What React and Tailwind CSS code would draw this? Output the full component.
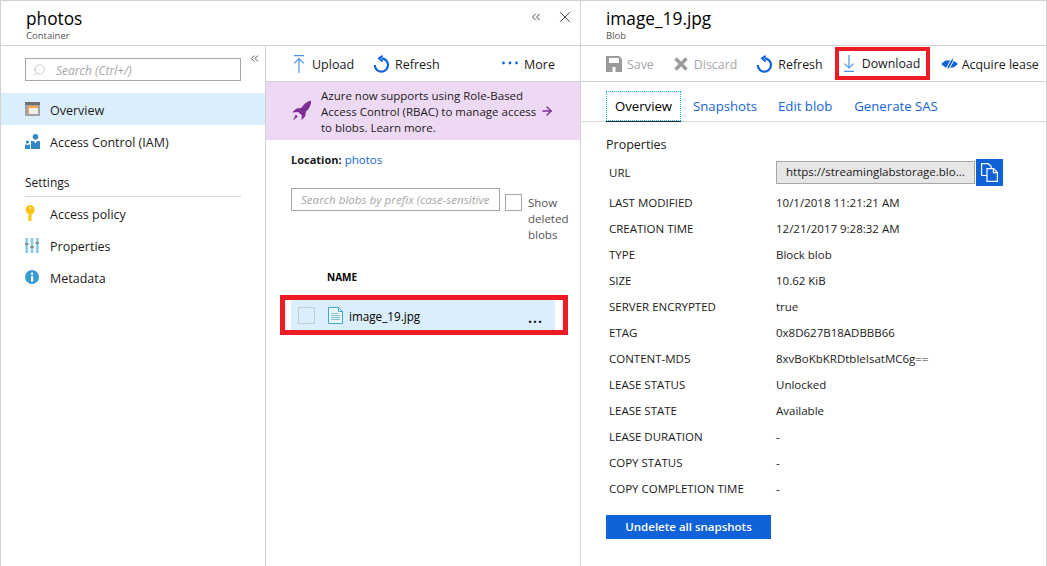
import { ChevronsLeft, X, Search, ArrowRight } from "lucide-react";

const font = { fontFamily: '"Open Sans", "Noto Sans", sans-serif' };

const props = [
  ["LAST MODIFIED", "10/1/2018 11:21:21 AM"],
  ["CREATION TIME", "12/21/2017 9:28:32 AM"],
  ["TYPE", "Block blob"],
  ["SIZE", "10.62 KiB"],
  ["SERVER ENCRYPTED", "true"],
  ["ETAG", "0x8D627B18ADBBB66"],
  ["CONTENT-MD5", "8xvBoKbKRDtbleIsatMC6g=="],
  ["LEASE STATUS", "Unlocked"],
  ["LEASE STATE", "Available"],
  ["LEASE DURATION", "-"],
  ["COPY STATUS", "-"],
  ["COPY COMPLETION TIME", "-"],
];

function OverviewIcon() {
  return (
    <svg width="15" height="14" viewBox="0 0 15 14">
      <rect width="15" height="14" fill="#a3a3a3" />
      <rect width="15" height="3" fill="#6f6f6f" />
      <rect x="3" y="4" width="10" height="8" fill="#f6a94a" />
      <rect x="4" y="6" width="9" height="6" fill="#f2f0e8" />
    </svg>
  );
}

function IamIcon() {
  return (
    <svg width="15" height="15" viewBox="0 0 15 15" fill="#2f87c4">
      <circle cx="10.5" cy="2.8" r="2.8" />
      <path d="M6 7h2.6l1.9 2.2L12.4 7H15v8H6z" />
      <circle cx="2.5" cy="8" r="1.6" />
      <path d="M0 10.5h1.6l.9 1 .9-1H5V15H0z" />
    </svg>
  );
}

function KeyIcon() {
  return (
    <svg width="10" height="16" viewBox="0 0 10 16" fill="#f9c514">
      <path d="M5 0a4.8 4.8 0 0 1 1.5 9.3V16H4l-1-1v-1.2l1-.8-1-.8V11l1-.8v-.9A4.8 4.8 0 0 1 5 0z" />
      <circle cx="5" cy="2.8" r="1" fill="#fff0a8" />
    </svg>
  );
}

function SlidersIcon() {
  return (
    <svg width="14" height="15" viewBox="0 0 14 15">
      <rect x="0" width="3.4" height="15" fill="#c4e2f1" />
      <rect x="5.3" width="3.4" height="15" fill="#c4e2f1" />
      <rect x="10.6" width="3.4" height="15" fill="#c4e2f1" />
      <rect x="1.2" width="1" height="15" fill="#5fb3dc" />
      <rect x="6.5" width="1" height="15" fill="#5fb3dc" />
      <rect x="11.8" width="1" height="15" fill="#5fb3dc" />
      <rect x="0" y="5" width="3.4" height="2" fill="#8c8c8c" />
      <rect x="5.3" y="8" width="3.4" height="2" fill="#8c8c8c" />
      <rect x="10.6" y="4" width="3.4" height="2" fill="#8c8c8c" />
    </svg>
  );
}

function InfoIcon() {
  return (
    <svg width="14" height="14" viewBox="0 0 14 14">
      <circle cx="7" cy="7" r="7" fill="#3a9bd0" />
      <rect x="6" y="6" width="2.2" height="5.5" fill="#fff" />
      <circle cx="7.1" cy="3.8" r="1.2" fill="#fff" />
    </svg>
  );
}

function RocketIcon() {
  return (
    <svg width="21" height="22" viewBox="0 0 21 22" fill="#7d2d96">
      <path d="M20 .5c.4 4.4-1.4 8.2-5 11l-.8 4.8-3.6 4 .2-5-3.6-3.4L1 12.4l4.6-3.8 4.6-.6C13 3.8 16 1.4 20 .5z" />
      <path d="M4.8 14.4l2 2L2 20.4z" />
    </svg>
  );
}

function FileIcon() {
  return (
    <svg width="15" height="17" viewBox="0 0 15 17" fill="none" stroke="#45a5d2">
      <path d="M.5.5h10l4 4v12H.5z" fill="#eaf6fc" />
      <path d="M10.5.5v4h4" />
      <path d="M3 6.5h7M3 8.5h9M3 10.5h9M3 12.5h9" stroke="#7fc0de" />
    </svg>
  );
}

function LeaseIcon() {
  return (
    <svg width="17" height="16" viewBox="0 0 17 16">
      <path d="M0 8l4.5-3.5h8L17 8l-4.5 3.5h-8z" fill="#0f62d8" />
      <path d="M5 13 10.5 3M7.6 13.6 13 4" stroke="#fff" strokeWidth="1" />
      <path d="M7 12.6 11.8 2.6" stroke="#0f62d8" strokeWidth="1" />
    </svg>
  );
}

function RefreshIcon() {
  return (
    <svg width="17" height="18" viewBox="0 0 17 18" fill="none" stroke="#0f62d8">
      <path d="M8.5 3.4a6.6 6.6 0 1 1-6.7 6.6" strokeWidth="2.2" />
      <path d="M9.6.8 6 3.4l3.6 3" strokeWidth="2" />
    </svg>
  );
}

function CopyIcon() {
  return (
    <svg width="17" height="19" viewBox="0 0 17 19" fill="none" stroke="#fff" strokeWidth="1.2">
      <path d="M6 12.5H.6V.6h6.6l3 3v2" />
      <path d="M6 5.6h6.6l3.8 3.8v9H6z" fill="#0f62d8" />
      <path d="M12.4 5.6v4h4" />
    </svg>
  );
}

function DiscardIcon() {
  return (
    <svg width="14" height="14" viewBox="0 0 14 14" stroke="#9a9a9a" strokeWidth="3.4">
      <path d="M1.5 1.5l11 11M12.5 1.5l-11 11" />
    </svg>
  );
}

function SaveIcon() {
  return (
    <svg width="16" height="16" viewBox="0 0 16 16" fill="#9a9a9a">
      <path d="M0 0h13l3 3v13H0z" />
      <rect x="3" y="2" width="10" height="5" fill="#fff" />
      <rect x="6.5" y="11" width="3" height="5" fill="#fff" />
    </svg>
  );
}

function UploadIcon() {
  return (
    <svg width="12" height="18" viewBox="0 0 12 18" fill="none" stroke="#4c95e6" strokeWidth="1.2">
      <path d="M1 .6h10M6 18V3.6M1.2 8.4 6 3.6l4.8 4.8" />
    </svg>
  );
}

function DownloadIcon() {
  return (
    <svg width="12" height="17" viewBox="0 0 12 17" fill="none" stroke="#4c95e6" strokeWidth="1.2">
      <path d="M1 16.4h10M6 0v13M1.4 8.6 6 13l4.6-4.4" />
    </svg>
  );
}

function MoreDots() {
  return (
    <svg width="16" height="4" viewBox="0 0 16 4" fill="#0f62d8" className="-mt-[2px]">
      <circle cx="1.5" cy="2" r="1.4" />
      <circle cx="8" cy="2" r="1.4" />
      <circle cx="14.5" cy="2" r="1.4" />
    </svg>
  );
}

function NavItem({ icon, label, active }) {
  return (
    <div className={`flex items-center h-8 pl-[24px] ${active ? "bg-[#dbeefc]" : ""}`}>
      <div className="w-[25px] flex items-center">{icon}</div>
      <span className="pt-[4px]">{label}</span>
    </div>
  );
}

export default function App() {
  return (
    <div style={font} className="w-[1047px] h-[566px] flex bg-white text-[12.5px] text-[#1a1a1a] overflow-hidden border-t border-[#d2d2d2]">
      {/* photos blade */}
      <div className="w-[580px] flex flex-col border-l border-[#d2d2d2] shrink-0">
        <div className="h-[45px] flex justify-between border-b border-[#d2d2d2] shrink-0">
          <div className="pl-[25px] pt-[6px]">
            <div className="text-[17.3px] leading-[23px] text-black">photos</div>
            <div className="text-[9.5px] leading-[12px] text-[#555]">Container</div>
          </div>
          <div className="flex gap-[13px] pr-[6px] pt-[7px] text-[#222]">
            <ChevronsLeft size={14} strokeWidth={1.4} className="mt-[2px]" />
            <X size={18} strokeWidth={1.1} />
          </div>
        </div>

        <div className="flex flex-1">
          {/* left nav */}
          <div className="w-[265px] border-r border-[#d2d2d2] relative shrink-0">
            <ChevronsLeft size={13} strokeWidth={1.4} className="absolute left-[247px] top-[6px] text-[#222]" />
            <div className="pt-[12px] pl-[24px]">
              <div className="w-[216px] h-[23px] border border-[#a6a6a6] flex items-center pl-[6px] gap-[10px] text-[12px] italic text-[#a6a6a6]">
                <Search size={14} strokeWidth={1} className="-scale-x-100" />
                <span className="pt-[3px]">Search (Ctrl+/)</span>
              </div>
            </div>
            <div className="mt-[12px]">
              <NavItem active icon={<OverviewIcon />} label="Overview" />
              <NavItem icon={<IamIcon />} label="Access Control (IAM)" />
            </div>
            <div className="mt-[12px] mx-[24px] w-[216px] h-[28px] border-b border-[#d9d9d9] leading-[27px] text-[12px]">Settings</div>
            <div>
              <NavItem icon={<KeyIcon />} label="Access policy" />
              <NavItem icon={<SlidersIcon />} label="Properties" />
              <NavItem icon={<InfoIcon />} label="Metadata" />
            </div>
          </div>

          {/* blob list */}
          <div className="flex-1 flex flex-col">
            <div className="h-9 flex items-center border-b border-[#d2d2d2] pl-[27px] pr-[25px] shrink-0">
              <UploadIcon />
              <span className="ml-[7px] pt-[3px]">Upload</span>
              <div className="ml-[19px]"><RefreshIcon /></div>
              <span className="ml-[5px] pt-[3px]">Refresh</span>
              <div className="ml-auto"><MoreDots /></div>
              <span className="ml-[6px] pt-[3px]">More</span>
            </div>
            <div className="h-[58px] bg-[#eed9f4] flex items-center pl-[25px] pr-[26px] shrink-0">
              <RocketIcon />
              <div className="ml-[9px] pt-[2px] leading-[16px] text-[11.5px] w-[218px] whitespace-nowrap">
                Azure now supports using Role-Based<br />Access Control (RBAC) to manage access<br />to blobs. Learn more.
              </div>
              <ArrowRight size={14} strokeWidth={2.4} className="ml-auto text-[#7d2d96]" />
            </div>
            <div className="pl-[25px] pt-[12px] leading-[16px] text-[11.5px]">
              <span className="font-bold text-[11px]">Location:</span> <span className="text-[#1565d8]">photos</span>
            </div>
            <div className="flex pl-[25px] pt-[20px]">
              <div className="w-[209px] h-[23px] border border-[#a6a6a6] px-[9px] text-[11.6px] leading-[21px] italic text-[#a6a6a6] overflow-hidden whitespace-nowrap">
                Search blobs by prefix (case-sensitive
              </div>
              <div className="w-[17px] h-[17px] border border-[#a6a6a6] ml-[5px] mt-[6px] shrink-0" />
              <div className="ml-[6px] mt-[7px] leading-[16px] text-[11.5px] text-[#555]">Show<br />deleted<br />blobs</div>
            </div>
            <div className="pl-[61px] mt-[27px] text-[10px] font-bold leading-[14px] text-black">NAME</div>
            {/* highlighted row */}
            <div className="ml-[14px] mt-[11px] w-[288px] h-[40px] border-[5px] border-[#ed1c24] pl-[6px] shrink-0">
              <div className="w-[264px] h-[30px] bg-[#dbeefc] flex items-center pl-[7px] pr-[12px]">
                <div className="w-[17px] h-[17px] border border-[#c5ced6]" />
                <div className="ml-[13px]"><FileIcon /></div>
                <span className="ml-[6px] pt-[3px] text-[11.7px] font-medium text-black">image_19.jpg</span>
                <span className="ml-auto font-bold text-[14px] leading-[14px] mt-[6px] tracking-[1px]">...</span>
              </div>
            </div>
          </div>
        </div>
      </div>

      {/* image_19.jpg blade */}
      <div className="w-[467px] flex flex-col border-l border-r border-[#d2d2d2]">
        <div className="h-[45px] border-b border-[#d2d2d2] pl-[25px] pt-[6px] shrink-0">
          <div className="text-[17.3px] leading-[23px] text-black">image_19.jpg</div>
          <div className="text-[9.5px] leading-[12px] text-[#555]">Blob</div>
        </div>
        <div className="h-9 flex items-center border-b border-[#d2d2d2] pl-[25px] shrink-0 whitespace-nowrap text-[12.4px]">
          <SaveIcon />
          <span className="ml-[5px] pt-[3px] text-[#a6a6a6]">Save</span>
          <div className="ml-[20px]"><DiscardIcon /></div>
          <span className="ml-[6px] pt-[3px] text-[#a6a6a6]">Discard</span>
          <div className="ml-[19px]"><RefreshIcon /></div>
          <span className="ml-[5px] pt-[3px]">Refresh</span>
          <div className="ml-[12px] h-[33px] w-[95px] border-4 border-[#ed1c24] flex items-center pl-[4px] shrink-0">
            <DownloadIcon />
            <span className="ml-[7px] pt-[1px]">Download</span>
          </div>
          <div className="ml-[11px]"><LeaseIcon /></div>
          <span className="ml-[4px] pt-[3px]">Acquire lease</span>
        </div>
        <div className="h-[40px] border-b border-[#d9d9d9] pl-[25px] flex items-start pt-[9px] text-[#1565d8] text-[13.2px] shrink-0 whitespace-nowrap">
          <div className="w-[75px] h-[30px] border border-dotted border-[#16b6e8] text-black flex items-center justify-center pt-[2px] shadow-[0_1px_0_#222]">Overview</div>
          <span className="ml-[12px] leading-[31px]">Snapshots</span>
          <span className="ml-[21px] leading-[31px]">Edit blob</span>
          <span className="ml-[22px] leading-[31px]">Generate SAS</span>
        </div>
        <div className="pl-[25px] pt-[14px] leading-[18px] text-[12.5px]">Properties</div>
        <div className="flex items-center pl-[28px] mt-[5px] h-[26px]">
          <span className="w-[167px] pt-[2px] text-[11.5px]">URL</span>
          <div className="w-[199px] h-[23px] bg-[#e6e6e6] border border-[#a6a6a6] pl-[9px] text-[11.5px] leading-[20px] whitespace-nowrap overflow-hidden">https://streaminglabstorage.blo...</div>
          <div className="w-[27px] h-[27px] bg-[#0f62d8] ml-[1px] flex items-center justify-center">
            <CopyIcon />
          </div>
        </div>
        <div className="mt-[5px]">
          {props.map(([k, v]) => (
            <div key={k} className="flex pl-[28px] h-[26px] items-center text-[11.5px]">
              <span className="w-[167px] shrink-0 whitespace-nowrap">{k}</span>
              <span>{v}</span>
            </div>
          ))}
        </div>
        <div className="ml-[25px] mt-[13px] w-[165px] h-6 bg-[#0f62d8] text-white font-semibold text-[11.5px] flex items-center justify-center">Undelete all snapshots</div>
      </div>
    </div>
  );
}
